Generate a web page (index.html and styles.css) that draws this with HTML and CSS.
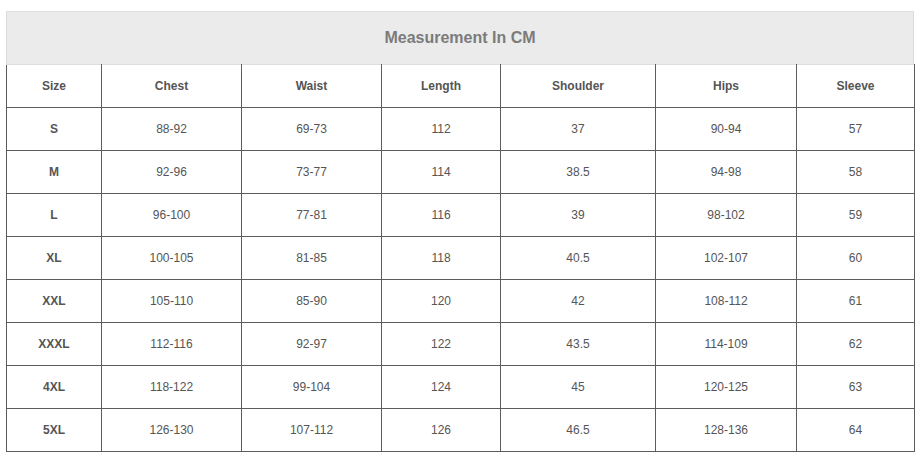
FILE: index.html
```html
<!DOCTYPE html>
<html>
<head>
<meta charset="utf-8">
<link rel="stylesheet" href="styles.css">
</head>
<body>
<div class="chart">
  <div class="title">Measurement In CM</div>
  <table class="sizes">
    <colgroup>
      <col class="c1"><col class="c2"><col class="c3"><col class="c4"><col class="c5"><col class="c6"><col class="c7">
    </colgroup>
    <thead>
      <tr><th>Size</th><th>Chest</th><th>Waist</th><th>Length</th><th>Shoulder</th><th>Hips</th><th>Sleeve</th></tr>
    </thead>
    <tbody>
      <tr><th>S</th><td>88-92</td><td>69-73</td><td>112</td><td>37</td><td>90-94</td><td>57</td></tr>
      <tr><th>M</th><td>92-96</td><td>73-77</td><td>114</td><td>38.5</td><td>94-98</td><td>58</td></tr>
      <tr><th>L</th><td>96-100</td><td>77-81</td><td>116</td><td>39</td><td>98-102</td><td>59</td></tr>
      <tr><th>XL</th><td>100-105</td><td>81-85</td><td>118</td><td>40.5</td><td>102-107</td><td>60</td></tr>
      <tr><th>XXL</th><td>105-110</td><td>85-90</td><td>120</td><td>42</td><td>108-112</td><td>61</td></tr>
      <tr><th>XXXL</th><td>112-116</td><td>92-97</td><td>122</td><td>43.5</td><td>114-109</td><td>62</td></tr>
      <tr><th>4XL</th><td>118-122</td><td>99-104</td><td>124</td><td>45</td><td>120-125</td><td>63</td></tr>
      <tr><th>5XL</th><td>126-130</td><td>107-112</td><td>126</td><td>46.5</td><td>128-136</td><td>64</td></tr>
    </tbody>
  </table>
</div>
</body>
</html>
```
FILE: styles.css
```css
html, body {
  margin: 0;
  padding: 0;
  background: #ffffff;
}
body {
  font-family: "Liberation Sans", Arial, sans-serif;
  color: #555555;
}
.chart {
  padding: 11px 6px 0 6px;
  width: 908px;
}
.title {
  box-sizing: border-box;
  height: 53px;
  background: #ebebeb;
  border: 1px solid #dddddd;
  border-bottom: none;
  display: flex;
  align-items: center;
  justify-content: center;
  font-size: 16px;
  font-weight: bold;
  color: #7b7b7b;
}
.sizes {
  border-collapse: collapse;
  table-layout: fixed;
  width: 908px;
}
.c1 { width: 95px; }
.c2 { width: 140px; }
.c3 { width: 140px; }
.c4 { width: 119px; }
.c5 { width: 155px; }
.c6 { width: 141px; }
.c7 { width: 118px; }
.sizes th, .sizes td {
  border: 1px solid #5c5c5c;
  height: 42px;
  padding: 0;
  text-align: center;
  vertical-align: middle;
  font-size: 12px;
  color: #555555;
}
.sizes th {
  font-weight: bold;
}
.sizes td {
  font-weight: normal;
}
.sizes thead th {
  border-top-color: #dddddd;
}
```
